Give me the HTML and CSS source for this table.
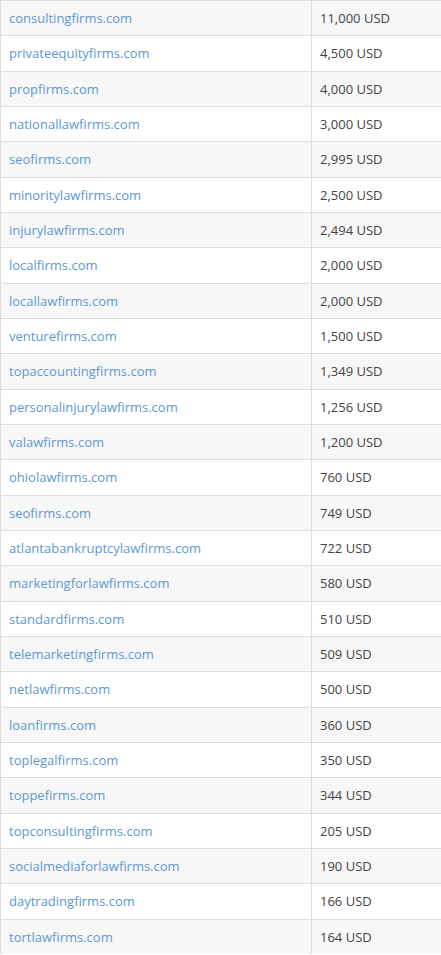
FILE: index.html
```html
<!DOCTYPE html>
<html>
<head>
<meta charset="utf-8">
<link rel="stylesheet" href="styles.css">
</head>
<body>
<table class="sales">
<tbody>
<tr><td class="domain"><a href="#">consultingfirms.com</a></td><td class="price">11,000 USD</td></tr>
<tr><td class="domain"><a href="#">privateequityfirms.com</a></td><td class="price">4,500 USD</td></tr>
<tr><td class="domain"><a href="#">propfirms.com</a></td><td class="price">4,000 USD</td></tr>
<tr><td class="domain"><a href="#">nationallawfirms.com</a></td><td class="price">3,000 USD</td></tr>
<tr><td class="domain"><a href="#">seofirms.com</a></td><td class="price">2,995 USD</td></tr>
<tr><td class="domain"><a href="#">minoritylawfirms.com</a></td><td class="price">2,500 USD</td></tr>
<tr><td class="domain"><a href="#">injurylawfirms.com</a></td><td class="price">2,494 USD</td></tr>
<tr><td class="domain"><a href="#">localfirms.com</a></td><td class="price">2,000 USD</td></tr>
<tr><td class="domain"><a href="#">locallawfirms.com</a></td><td class="price">2,000 USD</td></tr>
<tr><td class="domain"><a href="#">venturefirms.com</a></td><td class="price">1,500 USD</td></tr>
<tr><td class="domain"><a href="#">topaccountingfirms.com</a></td><td class="price">1,349 USD</td></tr>
<tr><td class="domain"><a href="#">personalinjurylawfirms.com</a></td><td class="price">1,256 USD</td></tr>
<tr><td class="domain"><a href="#">valawfirms.com</a></td><td class="price">1,200 USD</td></tr>
<tr><td class="domain"><a href="#">ohiolawfirms.com</a></td><td class="price">760 USD</td></tr>
<tr><td class="domain"><a href="#">seofirms.com</a></td><td class="price">749 USD</td></tr>
<tr><td class="domain"><a href="#">atlantabankruptcylawfirms.com</a></td><td class="price">722 USD</td></tr>
<tr><td class="domain"><a href="#">marketingforlawfirms.com</a></td><td class="price">580 USD</td></tr>
<tr><td class="domain"><a href="#">standardfirms.com</a></td><td class="price">510 USD</td></tr>
<tr><td class="domain"><a href="#">telemarketingfirms.com</a></td><td class="price">509 USD</td></tr>
<tr><td class="domain"><a href="#">netlawfirms.com</a></td><td class="price">500 USD</td></tr>
<tr><td class="domain"><a href="#">loanfirms.com</a></td><td class="price">360 USD</td></tr>
<tr><td class="domain"><a href="#">toplegalfirms.com</a></td><td class="price">350 USD</td></tr>
<tr><td class="domain"><a href="#">toppefirms.com</a></td><td class="price">344 USD</td></tr>
<tr><td class="domain"><a href="#">topconsultingfirms.com</a></td><td class="price">205 USD</td></tr>
<tr><td class="domain"><a href="#">socialmediaforlawfirms.com</a></td><td class="price">190 USD</td></tr>
<tr><td class="domain"><a href="#">daytradingfirms.com</a></td><td class="price">166 USD</td></tr>
<tr><td class="domain"><a href="#">tortlawfirms.com</a></td><td class="price">164 USD</td></tr>
</tbody>
</table>
</body>
</html>
```

FILE: styles.css
```css
html, body {
  margin: 0;
  padding: 0;
  background: #ffffff;
}
body {
  font-family: "Open Sans", "Liberation Sans", sans-serif;
  font-size: 13px;
  color: #444444;
}
.sales {
  width: 441px;
  border-collapse: collapse;
  table-layout: fixed;
}
.sales tr:nth-child(odd) {
  background: #f7f7f7;
}
.sales td {
  padding: 8px 8px 8px 8px;
  line-height: 18.33px;
  border-top: 1px solid #dddddd;
  border-left: 1px solid #dddddd;
  white-space: nowrap;
  vertical-align: top;
}
.sales .domain {
  width: 294px;
}
.sales a {
  color: #5e97d2;
  text-decoration: none;
}
.sales .price {
  color: #444444;
}
```
